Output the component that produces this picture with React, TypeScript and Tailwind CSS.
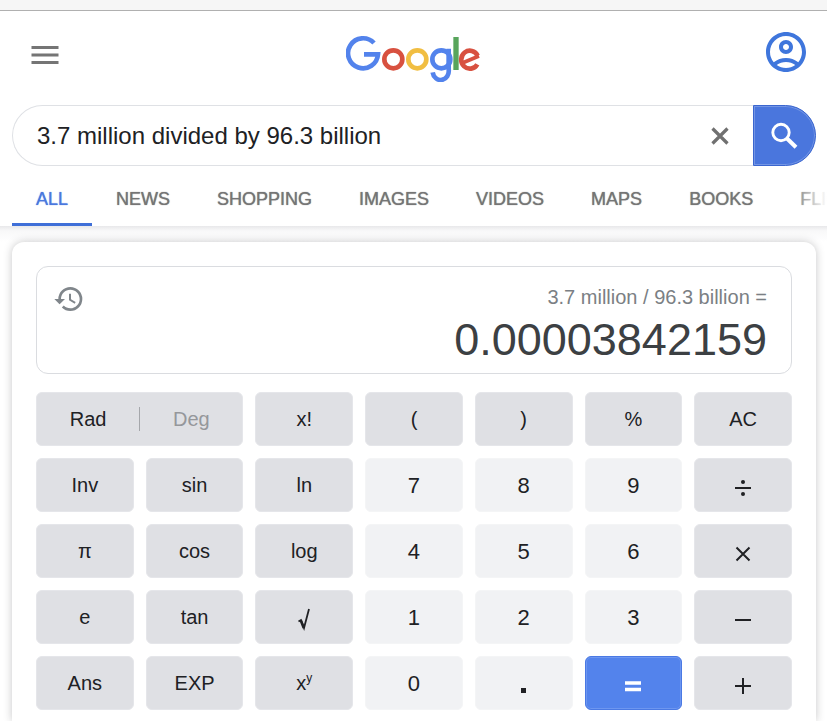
import { useState } from "react";
import type { ReactNode } from "react";
import { MdHistory, MdMenu, MdOutlineAccountCircle } from "react-icons/md";

const tabs = ["ALL", "NEWS", "SHOPPING", "IMAGES", "VIDEOS", "MAPS", "BOOKS", "FLIGHTS"];

function Logo() {
  return (
    <svg viewBox="45 45 405 141" className="h-[47px] w-[135px]" fill="none" strokeWidth="14" role="img" aria-label="Google">
      <path d="M129 69A45 45 0 1 0 141 103H99" stroke="#5383ec" />
      <circle cx="187" cy="118" r="27" stroke="#d85140" />
      <circle cx="259" cy="118" r="27" stroke="#f1be42" />
      <circle cx="331" cy="118" r="27" stroke="#5383ec" />
      <path d="M353 86V148A23 26 0 0 1 305 157" stroke="#5383ec" />
      <path d="M375 51V150" stroke="#58a55c" strokeWidth="16" />
      <path d="M440 107A26 27 0 1 0 439 133" stroke="#d85140" />
      <path d="M394 129L444 108" stroke="#d85140" strokeWidth="11" />
    </svg>
  );
}

function Symbol({ children }: { children: ReactNode }) {
  return (
    <svg viewBox="0 0 24 30" className="h-[30px] w-6" fill="none" stroke="currentColor" strokeWidth="2" aria-hidden="true">
      {children}
    </svg>
  );
}

type Key = { name: string; label?: ReactNode; kind?: "digit" | "equals" };

const digit = (name: string): Key => ({ name, kind: "digit" });

const keys: Key[] = [
  { name: "x!" },
  { name: "(" },
  { name: ")" },
  { name: "%" },
  { name: "AC" },
  { name: "Inv" },
  { name: "sin" },
  { name: "ln" },
  digit("7"),
  digit("8"),
  digit("9"),
  {
    name: "divide",
    label: (
      <Symbol>
        <path d="M4 18H20" />
        <circle cx="12" cy="12" r="2" fill="currentColor" stroke="none" />
        <circle cx="12" cy="24" r="2" fill="currentColor" stroke="none" />
      </Symbol>
    ),
  },
  { name: "π" },
  { name: "cos" },
  { name: "log" },
  digit("4"),
  digit("5"),
  digit("6"),
  { name: "multiply", label: <Symbol><path d="M5.5 11.5L18.5 24.5M18.5 11.5L5.5 24.5" /></Symbol> },
  { name: "e" },
  { name: "tan" },
  {
    name: "square root",
    label: (
      <Symbol>
        <path d="M6.5 19.5L9 18L12 26L17 7" strokeWidth="1.8" />
        <path d="M8.8 18.5L11.8 26" strokeWidth="2.6" />
      </Symbol>
    ),
  },
  digit("1"),
  digit("2"),
  digit("3"),
  { name: "minus", label: <Symbol><path d="M4 18H20" /></Symbol> },
  { name: "Ans" },
  { name: "EXP" },
  {
    name: "x to the power of y",
    label: (
      <span>
        x<sup className="-top-2 text-[12px]">y</sup>
      </span>
    ),
  },
  digit("0"),
  { name: "point", kind: "digit", label: <Symbol><path d="M9 22.5H14" strokeWidth="5" /></Symbol> },
  { name: "equals", kind: "equals", label: <Symbol><path d="M4 15H20M4 21.5H20" strokeWidth="3.4" /></Symbol> },
  { name: "plus", label: <Symbol><path d="M4 18H20M12 10V26" /></Symbol> },
];

const keyStyles = {
  plain: "border-[#e5e6ea] bg-[#dfe0e4] text-[20px]",
  digit: "border-[#f4f5f6] bg-[#f1f2f4] text-[22px]",
  equals: "border-[#4a79e4] bg-[#5383ec] text-white ring-1 ring-inset ring-[#6d96f0]",
};

export default function App() {
  const [query, setQuery] = useState("3.7 million divided by 96.3 billion");

  return (
    <div className="flex min-h-screen flex-col overflow-hidden bg-white font-['Liberation_Sans',Arial,sans-serif] text-[#202124]">
      <div className="h-[11px] border-b border-[#b0b0b0] bg-[#f6f6f6]" />

      <header className="flex h-[94px] items-start justify-between pr-[17px] pl-[27px]">
        <button type="button" aria-label="Menu" className="mt-[26px] w-[38px] text-[#757575]">
          <MdMenu size={36} />
        </button>
        <a href="#home" className="mt-6">
          <Logo />
        </a>
        <button type="button" aria-label="Account" className="mt-[17px] text-[#3f76dc]">
          <MdOutlineAccountCircle size={48} />
        </button>
      </header>

      <form className="mr-[11px] ml-3 flex h-[61px]" role="search" onSubmit={(e) => e.preventDefault()}>
        <div className="flex min-w-0 flex-1 items-center rounded-l-full border border-r-0 border-[#dfe1e5] pr-6 pl-6">
          <input
            type="text"
            aria-label="Search"
            value={query}
            onChange={(e) => setQuery(e.target.value)}
            className="min-w-0 flex-1 bg-transparent text-[24px] outline-none"
          />
          <button type="button" aria-label="Clear" onClick={() => setQuery("")} className="text-[#707070]">
            <svg viewBox="0 0 18 18" className="size-[18px]" fill="none" stroke="currentColor" strokeWidth="3.2" aria-hidden="true">
              <path d="M1.5 1.5L16.5 16.5M16.5 1.5L1.5 16.5" />
            </svg>
          </button>
        </div>
        <button
          type="submit"
          aria-label="Search"
          className="flex w-[63px] items-center justify-center rounded-r-full border border-[#3b66cf] bg-[#4a76dd] text-white ring-1 ring-inset ring-[#7395e4]"
        >
          <svg viewBox="0 0 36 36" className="size-9" fill="none" stroke="currentColor" aria-hidden="true">
            <circle cx="14" cy="14.5" r="8.2" strokeWidth="2.9" />
            <path d="M19.5 20L29 29.3" strokeWidth="4" />
          </svg>
        </button>
      </form>

      <nav className="relative flex h-[60px] shrink-0 overflow-hidden px-3 text-[18px] [text-shadow:0_0_1px_currentColor]">
        {tabs.map((tab, i) => (
          <a
            key={tab}
            href={"#" + tab.toLowerCase()}
            className={
              i === 0
                ? "flex shrink-0 items-center border-b-3 border-[#3f6fd8] px-6 pt-2.5 text-[#4a78de]"
                : "flex shrink-0 items-center border-b-3 border-transparent pt-2.5 pr-[23px] pl-6 text-[#757575]"
            }
          >
            {tab}
          </a>
        ))}
        <div className="pointer-events-none absolute inset-y-0 right-0 w-9 bg-linear-to-r from-transparent to-white" />
      </nav>
      <div className="h-4 bg-linear-to-b from-[#e8e8ea] via-[#f8f8f9] via-30% to-white" />

      <main className="mr-[11px] ml-3 flex-1 rounded-t-xl px-6 pt-6 pb-2 shadow-[0_0_8px_rgba(32,33,36,0.25)]">
        <section aria-label="Result" className="flex h-[108px] items-start justify-between rounded-xl border border-[#dadce0] pt-4 pr-6 pl-4">
          <button type="button" aria-label="History" className="text-[#80868b]">
            <MdHistory size={32} />
          </button>
          <output className="text-right">
            <span className="block text-[20px] leading-7 text-[#7b7f84]">3.7 million / 96.3 billion =</span>
            <span className="block text-[45px] leading-[58px] text-[#3c4043]">0.00003842159</span>
          </output>
        </section>

        <div className="mt-[18px] grid auto-rows-[54px] grid-cols-7 gap-3">
          <div className="col-span-2 flex items-center rounded-md border border-[#e5e6ea] bg-[#dfe0e4] text-[20px]">
            <button type="button" className="h-full flex-1">Rad</button>
            <div className="h-6 w-px bg-[#a5a7ab]" />
            <button type="button" className="h-full flex-1 text-[#95979b]">Deg</button>
          </div>
          {keys.map((key) => (
            <button
              key={key.name}
              type="button"
              aria-label={key.label ? key.name : undefined}
              className={"flex items-center justify-center rounded-md border " + keyStyles[key.kind ?? "plain"]}
            >
              {key.label ?? key.name}
            </button>
          ))}
        </div>
      </main>
    </div>
  );
}
